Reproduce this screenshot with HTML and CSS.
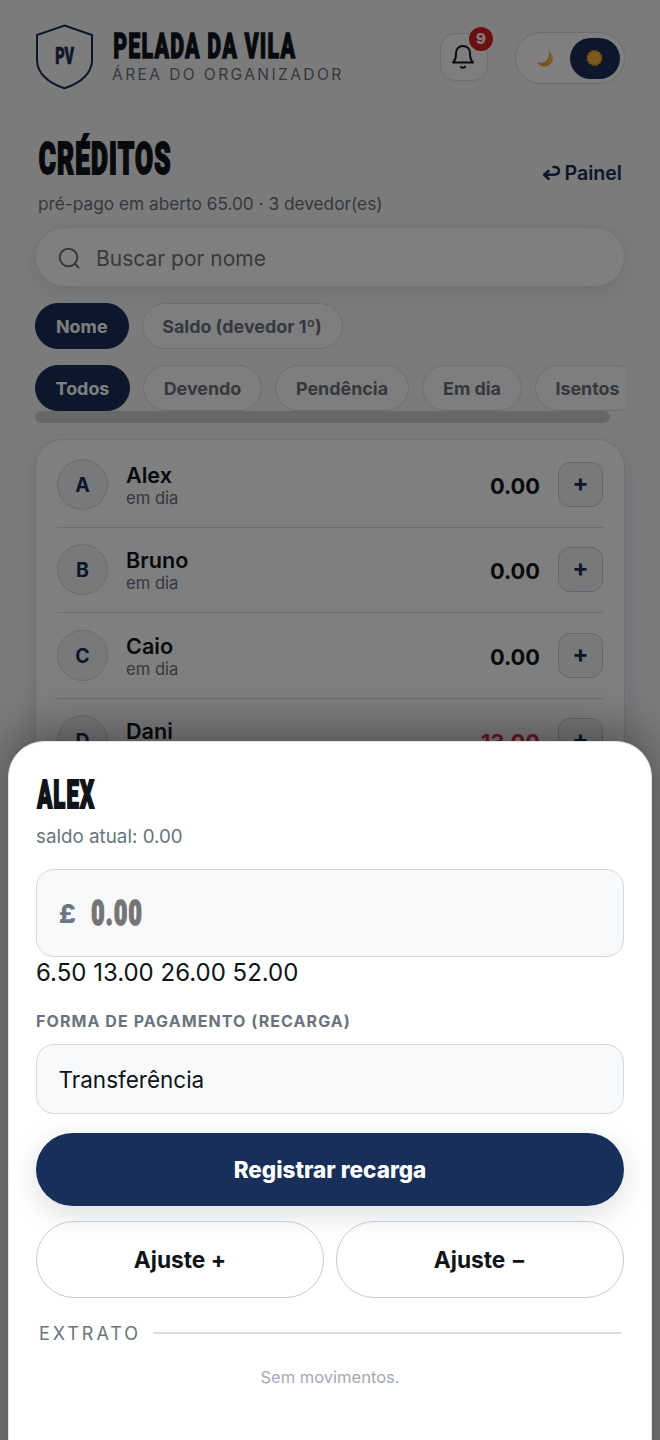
FILE: index.html
```html
<!DOCTYPE html>
<html lang="pt">
<head>
<meta charset="utf-8">
<title>Pelada da Vila – Créditos</title>
<link rel="stylesheet" href="styles.css">
</head>
<body>
<div class="page">
  <header class="topbar">
    <svg class="crest" width="58" height="66" viewBox="0 0 58 66">
      <path d="M28.500 1.500 L56 11 V36 C56 49 45 59 28.500 64.300 C12 59 1 49 1 36 V11 Z" fill="#fafafa" stroke="#182f59" stroke-width="2"/>
      <text class="display navy" x="19.200" y="39.600" font-size="23.500" textLength="19" lengthAdjust="spacingAndGlyphs">PV</text>
    </svg>
    <div class="brand">
      <svg class="brand-name" width="190" height="30" viewBox="0 0 190 30"><text class="display" x="1.200" y="28" font-size="35.500" textLength="183" lengthAdjust="spacingAndGlyphs">PELADA DA VILA</text></svg>
      <div class="brand-sub">ÁREA DO ORGANIZADOR</div>
    </div>
    <div class="bell">
      <svg width="24" height="26" viewBox="0 0 24 26" fill="none" stroke="#0f1419" stroke-width="2" stroke-linecap="round" stroke-linejoin="round"><path d="M2 18.500 C4.200 16.500 5 13.500 5 9.500 C5 4.800 8 2 12 2 C16 2 19 4.800 19 9.500 C19 13.500 19.800 16.500 22 18.500 Z"/><path d="M10 22.800 C11 24 13 24 14 22.800"/></svg>
      <span class="badge">9</span>
    </div>
    <div class="theme">
      <span class="theme-opt"><svg width="18" height="18" viewBox="0 0 18 18"><path d="M13 2 C18 7 18 13.500 12.500 16.500 C8 19 2.800 16.800 1 13 C5.500 14.800 9.500 13.500 11.500 10.200 C13 7.700 13.300 5 13 2 Z" fill="#f0a43c"/><path d="M14.500 5.500 C16 9 14.500 13 11 15" fill="none" stroke="#f8c84e" stroke-width="1.600"/></svg></span>
      <span class="theme-opt on"><svg width="18" height="18" viewBox="0 0 18 18"><circle cx="8.500" cy="9" r="7" fill="#f5a623" stroke="#f39a1e" stroke-width="1.900" stroke-dasharray="2.700 .965"/><circle cx="8.500" cy="9" r="6" fill="#f6b73c"/></svg></span>
    </div>
  </header>

  <section class="heading">
    <div>
      <svg class="page-title" width="140" height="46" viewBox="0 0 140 46"><text class="display heavy" x="1.800" y="40.400" font-size="44" textLength="133" lengthAdjust="spacingAndGlyphs">CRÉDITOS</text></svg>
      <div class="page-sub">pré-pago em aberto 65.00 · 3 devedor(es)</div>
    </div>
    <a class="back"><svg width="19" height="16" viewBox="0 0 19 16" fill="none" stroke="#182f59" stroke-width="2.600" stroke-linecap="round" stroke-linejoin="round"><path d="M11.500 2 C15 1.600 17 3.400 17 5.800 C17 8.800 14.500 9.800 11 9.800 H3"/><path d="M6.500 6 L2.200 9.800 L6.500 13.800"/></svg><span>Painel</span></a>
  </section>

  <div class="search">
    <svg width="24" height="24" viewBox="0 0 24 24" fill="none" stroke="#6b737c" stroke-width="2" stroke-linecap="round"><circle cx="11.500" cy="11.500" r="8.800"/><path d="M18 18 L21.500 21.500"/></svg>
    <span>Buscar por nome</span>
  </div>

  <div class="chips sort">
    <span class="chip on w-nome">Nome</span><span class="chip w-saldo">Saldo (devedor 1º)</span>
  </div>
  <div class="chips filter">
    <span class="chip on w-todos">Todos</span><span class="chip w-devendo">Devendo</span><span class="chip w-pend">Pendência</span><span class="chip w-emdia">Em dia</span><span class="chip w-isentos">Isentos</span>
  </div>
  <div class="scrollbar"></div>

  <div class="list">
    <div class="row"><span class="avatar">A</span><div class="who"><b>Alex</b><small>em dia</small></div><span class="amount">0.00</span><span class="add">+</span></div>
    <div class="row"><span class="avatar">B</span><div class="who"><b>Bruno</b><small>em dia</small></div><span class="amount">0.00</span><span class="add">+</span></div>
    <div class="row"><span class="avatar">C</span><div class="who"><b>Caio</b><small>em dia</small></div><span class="amount">0.00</span><span class="add">+</span></div>
    <div class="row"><span class="avatar">D</span><div class="who"><b>Dani</b><small>devendo</small></div><span class="amount debt">13.00</span><span class="add">+</span></div>
  </div>
</div>

<div class="backdrop"></div>

<div class="sheet">
  <svg class="sheet-title" width="70" height="32" viewBox="0 0 70 32"><text class="display heavy" x="1.200" y="29" font-size="38.500" textLength="58" lengthAdjust="spacingAndGlyphs">ALEX</text></svg>
  <div class="balance">saldo atual: 0.00</div>
  <div class="money">
    <span class="currency">£</span>
    <svg width="60" height="30" viewBox="0 0 60 30"><text class="display heavy grey" x="1.200" y="26.600" font-size="34.500" textLength="52" lengthAdjust="spacingAndGlyphs">0.00</text></svg>
  </div>
  <div class="presets">6.50 13.00 26.00 52.00</div>
  <div class="label">FORMA DE PAGAMENTO (RECARGA)</div>
  <div class="select">Transferência</div>
  <div class="primary">Registrar recarga</div>
  <div class="adjust"><span class="ghost">Ajuste +</span><span class="ghost">Ajuste −</span></div>
  <div class="divider"><span>EXTRATO</span><i></i></div>
  <div class="empty">Sem movimentos.</div>
</div>
</body>
</html>
```
FILE: styles.css
```css
* { box-sizing: border-box; }
html, body { margin: 0; }
body {
  position: relative;
  width: 660px;
  height: 1440px;
  overflow: hidden;
  background: #f6f7f9;
  color: #0f1419;
  font-family: Inter, "Liberation Sans", sans-serif;
}
svg { display: block; flex: none; overflow: visible; }

.display {
  font-family: Roboto, Inter, sans-serif;
  font-weight: 900;
  letter-spacing: 2px;
  fill: #0f1419;
  stroke: #0f1419;
  stroke-width: 1.3px;
}
.display.heavy { stroke-width: 2px; }
.display.navy { fill: #182f59; stroke: #182f59; stroke-width: .7px; letter-spacing: 0; }
.display.grey { fill: #757575; stroke: #757575; stroke-width: 1.7px; }

.page { height: 1440px; padding: 24px 35px 0; }

.topbar { display: flex; height: 66px; }
.crest { margin-left: 1px; }
.brand { margin-left: 18px; padding-top: 6px; width: 328px; }
.brand-sub { margin-top: 5px; font-size: 15.6px; line-height: 20px; letter-spacing: 2.37px; color: #6b737c; white-space: nowrap; }
.bell {
  position: relative;
  display: flex;
  justify-content: center;
  align-items: center;
  width: 48px;
  height: 48px;
  margin-top: 9px;
  padding-bottom: 1px;
  padding-right: 2px;
  border: 1.5px solid #d9dce2;
  border-radius: 15px;
  background: #fcfcfd;
}
.badge {
  position: absolute;
  top: -7px;
  right: -6px;
  width: 24px;
  height: 24px;
  border-radius: 12px;
  background: #d81f26;
  color: #fff;
  font-size: 15px;
  font-weight: 800;
  line-height: 23px;
  text-align: center;
}
.theme {
  display: flex;
  align-items: center;
  width: 110px;
  height: 52px;
  margin: 8px 0 0 27px;
  padding: 0 4px;
  border: 1.5px solid #d9dce2;
  border-radius: 26px;
  background: #fff;
}
.theme-opt { display: flex; justify-content: center; align-items: center; width: 50px; height: 41px; border-radius: 21px; }
.theme-opt.on { background: #182f59; }

.heading { display: flex; justify-content: space-between; height: 137px; padding: 44px 3px 0 2px; }
.page-sub { margin: 12px 0 0 1px; font-size: 17.25px; line-height: 24px; color: #6b737c; white-space: nowrap; }
.back { display: flex; gap: 3px; height: 24px; margin-top: 27px; font-size: 19.6px; font-weight: 600; line-height: 24px; color: #182f59; }
.back svg { margin-top: 4px; }

.search {
  display: flex;
  align-items: center;
  gap: 15px;
  height: 60px;
  padding: 2px 21px 0;
  border: 1px solid #e4e6ea;
  border-radius: 30px;
  background: #fff;
  box-shadow: 0 6px 24px rgba(15, 25, 40, .1);
  font-size: 21px;
  color: #757575;
}

.chips { display: flex; height: 46px; }
.sort { gap: 13px; margin-top: 16px; }
.filter { gap: 13px; width: 591px; margin-top: 16px; overflow: hidden; }
.chip {
  flex: none;
  height: 46px;
  border: 1.5px solid #d9dce2;
  border-radius: 23px;
  background: #fcfcfd;
  color: #6b737c;
  font-size: 17.9px;
  font-weight: 700;
  line-height: 45px;
  text-align: center;
  white-space: nowrap;
}
.chip.on { border-color: #182f59; background: #182f59; color: #fff; }
.w-nome { width: 93.5px; }
.w-saldo { width: 201px; }
.w-todos { width: 95px; }
.w-devendo { width: 119px; }
.w-pend { width: 134px; }
.w-emdia { width: 100px; }
.w-isentos { width: 105px; }
.scrollbar { width: 575px; height: 12px; border-radius: 6px; background: #ccd0d5; }

.list {
  height: 700px;
  margin-top: 15.5px;
  padding: 2.5px 21px 0;
  border: 1.5px solid #dfe1e6;
  border-radius: 28px;
  background: #fff;
  box-shadow: 0 6px 24px rgba(15, 25, 40, .1);
}
.row { display: flex; align-items: center; height: 85.5px; border-bottom: 1.5px solid #d9dce2; }
.avatar { width: 51px; height: 51px; border: 1.5px solid #d3d6dc; border-radius: 50%; background: #f0f3f7; color: #182f59; font-size: 19.5px; font-weight: 700; line-height: 50px; text-align: center; }
.who { flex: 1; margin-left: 18px; padding-top: 2px; }
.who b { display: block; font-size: 21.6px; font-weight: 600; line-height: 26px; }
.who small { display: block; font-size: 16.6px; line-height: 21px; color: #6b737c; }
.amount { padding-top: 3px; font-size: 21.8px; font-weight: 700; }
.amount.debt { color: #dc3545; }
.add { width: 45px; height: 45px; margin-left: 18px; border: 1.5px solid #c9cdd5; border-radius: 12px; background: #f0f3f7; color: #182f59; font-size: 24px; font-weight: 700; line-height: 40px; text-align: center; }

.backdrop { position: absolute; inset: 0; background: rgba(0, 0, 0, .5); }

.sheet {
  position: absolute;
  top: 741px;
  left: 8px;
  right: 8px;
  height: 760px;
  padding: 37px 27px 0;
  border: 1px solid #e2e4e8;
  border-radius: 36px 36px 0 0;
  background: #fff;
  box-shadow: 0 -8px 50px rgba(0, 0, 0, .4);
}
.balance { margin-top: 14px; font-size: 18.8px; line-height: 24px; color: #6b737c; }
.money { display: flex; align-items: center; height: 88px; margin-top: 20px; padding-left: 22px; border: 1.5px solid #d3d7df; border-radius: 18px; background: #f8f9fb; }
.currency { width: 31px; font-size: 26px; font-weight: 800; color: #6b7785; }
.presets { font-size: 24px; line-height: 32px; }
.label { margin-top: 22px; font-size: 16px; font-weight: 700; line-height: 20px; letter-spacing: 1.08px; color: #6b737c; }
.select { height: 70px; margin-top: 13px; padding-left: 21.5px; border: 1.5px solid #d3d7df; border-radius: 18px; background: #f8f9fb; font-size: 22.5px; line-height: 69px; }
.primary { height: 73px; margin-top: 19px; border-radius: 37px; background: #182f59; box-shadow: 0 8px 28px rgba(15, 25, 40, .15); color: #fff; font-size: 22.5px; font-weight: 800; line-height: 73px; text-align: center; }
.adjust { display: flex; gap: 12px; margin-top: 15px; }
.ghost { flex: 1; height: 77px; border: 1.5px solid #c6cad2; border-radius: 38px; font-size: 22.7px; font-weight: 700; line-height: 75px; text-align: center; }
.divider { display: flex; align-items: center; gap: 12px; height: 24px; margin-top: 23px; padding: 0 3px; font-size: 18px; letter-spacing: 2.95px; color: #6b737c; }
.divider i { flex: 1; height: 1.5px; background: #d9dce2; }
.empty { margin-top: 21px; font-size: 16.5px; line-height: 22px; color: #a3a9b4; text-align: center; }
```
